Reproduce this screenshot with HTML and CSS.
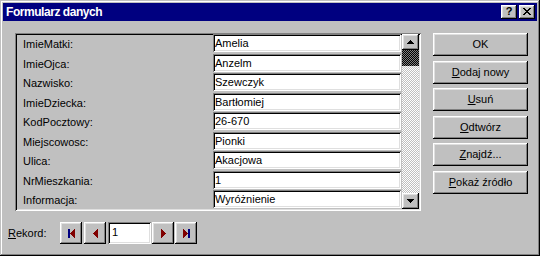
FILE: index.html
```html
<!DOCTYPE html>
<html lang="pl">
<head>
<meta charset="utf-8">
<title>Formularz danych</title>
<link rel="stylesheet" href="styles.css">
</head>
<body>
<div class="window">
  <div class="titlebar">
    <span class="title">Formularz danych</span>
    <div class="tb-buttons">
      <div class="tb-btn raised"><span class="q">?</span></div>
      <div class="tb-btn raised">
        <svg width="8" height="7" viewBox="0 0 8 7" shape-rendering="crispEdges"><path d="M0 0h2v1h-2zM6 0h2v1h-2zM1 1h2v1h-2zM5 1h2v1h-2zM2 2h4v1h-4zM3 3h2v1h-2zM2 4h4v1h-4zM1 5h2v1h-2zM5 5h2v1h-2zM0 6h2v1h-2zM6 6h2v1h-2z" fill="#000"/></svg>
      </div>
    </div>
  </div>
  <div class="content">
    <div class="main">
      <div class="panel">
        <div class="fields">
          <div class="row"><span class="label">ImieMatki:</span><span class="field">Amelia</span></div>
          <div class="row"><span class="label">ImieOjca:</span><span class="field">Anzelm</span></div>
          <div class="row"><span class="label">Nazwisko:</span><span class="field">Szewczyk</span></div>
          <div class="row"><span class="label">ImieDziecka:</span><span class="field">Bartłomiej</span></div>
          <div class="row"><span class="label">KodPocztowy:</span><span class="field">26-670</span></div>
          <div class="row"><span class="label">Miejscowosc:</span><span class="field">Pionki</span></div>
          <div class="row"><span class="label">Ulica:</span><span class="field">Akacjowa</span></div>
          <div class="row"><span class="label">NrMieszkania:</span><span class="field">1</span></div>
          <div class="row"><span class="label">Informacja:</span><span class="field">Wyróżnienie</span></div>
        </div>
        <div class="scrollbar">
          <div class="sb-btn raised">
            <svg width="7" height="4" viewBox="0 0 7 4" shape-rendering="crispEdges"><path d="M3 0h1v1h-1zM2 1h3v1h-3zM1 2h5v1h-5zM0 3h7v1h-7z" fill="#000"/></svg>
          </div>
          <div class="sb-thumb"></div>
          <div class="sb-track"></div>
          <div class="sb-btn raised">
            <svg width="7" height="4" viewBox="0 0 7 4" shape-rendering="crispEdges"><path d="M0 0h7v1h-7zM1 1h5v1h-5zM2 2h3v1h-3zM3 3h1v1h-1z" fill="#000"/></svg>
          </div>
        </div>
      </div>
      <div class="nav">
        <span class="nav-label"><u>R</u>ekord:</span>
        <div class="nav-btn raised">
          <svg width="7" height="9" viewBox="0 0 7 9" shape-rendering="crispEdges"><rect x="0" y="0" width="2" height="9" fill="#000080"/><path d="M6 0h1v9h-1zM5 1h1v7h-1zM4 2h1v5h-1zM3 3h1v3h-1zM2 4h1v1h-1z" fill="#800000"/></svg>
        </div>
        <div class="nav-btn raised gap2">
          <svg width="5" height="9" viewBox="0 0 5 9" shape-rendering="crispEdges"><path d="M4 0h1v9h-1zM3 1h1v7h-1zM2 2h1v5h-1zM1 3h1v3h-1zM0 4h1v1h-1z" fill="#800000"/></svg>
        </div>
        <div class="nav-field">1</div>
        <div class="nav-btn raised">
          <svg width="5" height="9" viewBox="0 0 5 9" shape-rendering="crispEdges"><path d="M0 0h1v9h-1zM1 1h1v7h-1zM2 2h1v5h-1zM3 3h1v3h-1zM4 4h1v1h-1z" fill="#800000"/></svg>
        </div>
        <div class="nav-btn raised">
          <svg width="7" height="9" viewBox="0 0 7 9" shape-rendering="crispEdges"><path d="M0 0h1v9h-1zM1 1h1v7h-1zM2 2h1v5h-1zM3 3h1v3h-1zM4 4h1v1h-1z" fill="#800000"/><rect x="5" y="0" width="2" height="9" fill="#000080"/></svg>
        </div>
      </div>
    </div>
    <div class="actions">
      <div class="btn raised">OK</div>
      <div class="btn raised"><span><u>D</u>odaj nowy</span></div>
      <div class="btn raised"><span><u>U</u>suń</span></div>
      <div class="btn raised"><span><u>O</u>dtwórz</span></div>
      <div class="btn raised"><span><u>Z</u>najdź...</span></div>
      <div class="btn raised"><span><u>P</u>okaż źródło</span></div>
    </div>
  </div>
</div>
</body>
</html>
```
FILE: styles.css
```css
html, body {
  margin: 0;
  padding: 0;
  background: #c0c0c0;
}

body {
  font-family: "Liberation Sans", Arial, sans-serif;
  font-size: 11px;
  color: #000;
}

u {
  text-decoration: underline;
  text-underline-offset: 1px;
}

.window {
  width: 540px;
  height: 256px;
  box-sizing: border-box;
  padding: 3px;
  background: #c0c0c0;
  box-shadow: inset -1px -1px #000, inset 1px 1px #c0c0c0, inset -2px -2px #808080, inset 2px 2px #fff;
  display: flex;
  flex-direction: column;
}

.raised {
  background: #c0c0c0;
  box-shadow: inset -1px -1px #000, inset 1px 1px #fff, inset -2px -2px #808080, inset 2px 2px #dfdfdf;
  box-sizing: border-box;
}

.titlebar {
  height: 18px;
  flex: none;
  background: #000080;
  display: flex;
  align-items: center;
  justify-content: space-between;
  padding: 0 2px 0 3px;
}

.title {
  color: #fff;
  font-weight: bold;
  font-size: 12px;
  letter-spacing: -0.45px;
  line-height: 18px;
}

.tb-buttons {
  display: flex;
  gap: 2px;
}

.tb-btn {
  width: 16px;
  height: 14px;
  display: flex;
  align-items: center;
  justify-content: center;
  padding-bottom: 1px;
}

.q {
  font-weight: bold;
  font-size: 11px;
  line-height: 11px;
}

.content {
  display: flex;
  padding: 12px 0 0 5px;
}

.main {
  display: flex;
  flex-direction: column;
  width: 413px;
}

.panel {
  margin-left: 7px;
  width: 406px;
  height: 178px;
  box-sizing: border-box;
  padding: 1px 2px 2px 2px;
  display: flex;
  box-shadow: inset 1px 1px #808080, inset -1px -1px #fff, inset 2px 2px #000, inset -2px -2px #dfdfdf;
}

.fields {
  display: flex;
  flex-direction: column;
  gap: 1.5px;
}

.row {
  display: flex;
  height: 18px;
}

.label {
  width: 196px;
  box-sizing: border-box;
  padding: 3px 0 0 6px;
  line-height: 14px;
}

.field {
  width: 188px;
  height: 18px;
  box-sizing: border-box;
  padding: 2px 2px 2px 2px;
  line-height: 14px;
  background: #fff;
  box-shadow: inset 1px 1px #808080, inset -1px -1px #fff, inset 2px 2px #000, inset -2px -2px #dfdfdf;
  white-space: nowrap;
}

.scrollbar {
  margin-left: 1px;
  width: 17px;
  display: flex;
  flex-direction: column;
}

.sb-btn {
  width: 17px;
  height: 16px;
  flex: none;
  display: flex;
  align-items: center;
  justify-content: center;
  padding-bottom: 1px;
}

.sb-thumb {
  height: 16px;
  flex: none;
  background: repeating-conic-gradient(#000 0 25%, #808080 0 50%) 0 0 / 2px 2px;
}

.sb-track {
  flex: 1;
  background: repeating-conic-gradient(#c0c0c0 0 25%, #fff 0 50%) 0 0 / 2px 2px;
}

.nav {
  display: flex;
  align-items: center;
  margin-top: 11px;
  height: 22px;
}

.nav-label {
  width: 52px;
  line-height: 14px;
}

.nav-btn {
  width: 22px;
  height: 22px;
  display: flex;
  align-items: center;
  justify-content: center;
  margin-right: 1px;
}

.nav-btn.gap2 {
  margin-left: 1px;
}

.nav-field {
  width: 43px;
  height: 22px;
  box-sizing: border-box;
  margin-left: 1px;
  margin-right: 1px;
  padding: 3px 3px 0 4px;
  line-height: 14px;
  background: #fff;
  box-shadow: inset 1px 1px #808080, inset -1px -1px #fff, inset 2px 2px #000, inset -2px -2px #dfdfdf;
}

.actions {
  display: flex;
  flex-direction: column;
  gap: 4.6px;
  margin-left: 12px;
}

.btn {
  width: 95px;
  height: 23px;
  display: flex;
  align-items: center;
  justify-content: center;
  line-height: 14px;
  padding-bottom: 1px;
}
```
